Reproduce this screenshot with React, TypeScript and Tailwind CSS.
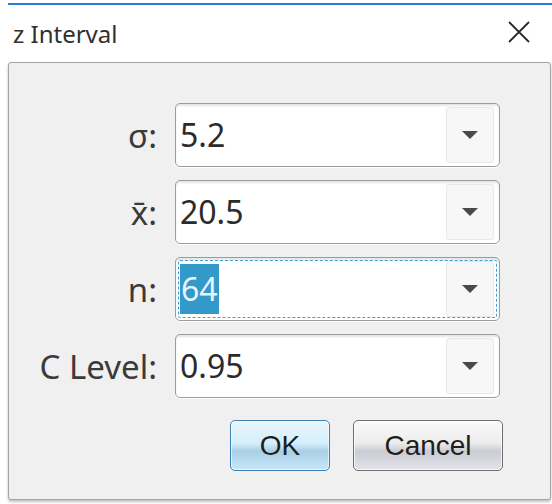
import type { ReactNode } from "react";

type Field = {
  label: string;
  value: string;
  focused?: boolean;
};

const fields: Field[] = [
  { label: "σ:", value: "5.2" },
  { label: "x̄:", value: "20.5" },
  { label: "n:", value: "64", focused: true },
  { label: "C Level:", value: "0.95" },
];

function ComboBox({ value, focused }: { value: string; focused?: boolean }) {
  return (
    <div
      className={`flex h-[64px] w-[325px] items-stretch rounded-[5px] border border-[#9c9c9c] bg-white shadow-[inset_0_2px_2px_rgba(0,0,0,0.10),0_1px_0_#ffffff] ${
        focused ? "outline-1 outline-dashed outline-[#3a9fd5] -outline-offset-[4px]" : ""
      }`}
    >
      <div className="flex flex-1 items-center pl-[4px] text-[32px] leading-none text-[#2b2b2b]">
        {focused ? (
          <span className="inline-block bg-[#3399c8] px-[1px] leading-[50px] text-[#e6f5ff]">
            {value}
          </span>
        ) : (
          <span>{value}</span>
        )}
      </div>
      {/* dropdown arrow segment */}
      <div className="my-[3px] mr-[5px] flex w-[48px] items-center justify-center rounded-[3px] border border-[#e8e8e8] bg-[#f7f7f7]">
        <svg width="16" height="8" viewBox="0 0 16 8">
          <path d="M0 0 L16 0 L8 8 Z" fill="#4a4a4a" />
        </svg>
      </div>
    </div>
  );
}

function DialogButton({
  children,
  primary,
  width,
}: {
  children: ReactNode;
  primary?: boolean;
  width: string;
}) {
  return (
    <button
      className={`${width} flex h-[51px] items-center justify-center rounded-[5px] border font-['Liberation_Sans',Arial,sans-serif] text-[28px] leading-none text-[#1e1e1e] ${
        primary
          ? "border-[#3c7fb1] bg-[linear-gradient(to_bottom,#eaf6fd_0%,#d4effc_45%,#a9cfe6_62%,#c9e6f7_100%)] shadow-[inset_0_0_0_1px_rgba(255,255,255,0.6)]"
          : "border-[#707070] bg-[linear-gradient(to_bottom,#fafafa_0%,#ececec_45%,#c9ccd3_62%,#e2e4e8_100%)] shadow-[inset_0_0_0_1px_rgba(255,255,255,0.7)]"
      }`}
    >
      {children}
    </button>
  );
}

export default function App() {
  return (
    <div className="h-[504px] w-[552px] overflow-hidden bg-white font-['Noto_Sans',sans-serif]">
      {/* edge of the window behind */}
      <div className="h-[3px]" />
      <div className="ml-[8px] h-[2px] bg-[#2b7bd6]" />

      {/* ================= TITLE BAR ================= */}
      <div className="flex h-[57px] items-center justify-between pl-[13px] pr-[22px]">
        <h1 className="text-[24px] leading-none text-[#303030]">z Interval</h1>
        <svg width="22" height="22" viewBox="0 0 22 22" className="mb-[3px]">
          <path d="M1 1 L21 21 M21 1 L1 21" stroke="#2a2a2a" strokeWidth="1.8" />
        </svg>
      </div>

      {/* ================= PANEL ================= */}
      <div className="ml-[8px] mr-[1px] h-[438px] rounded-[3px] border border-[#a3a3a3] bg-[#f0f0f0] pt-[40px] shadow-[0_2px_3px_rgba(0,0,0,0.25)]">
        <div className="flex flex-col gap-[13px]">
          {fields.map((f) => (
            <div key={f.label} className="flex items-center gap-[18px]">
              <span className="w-[148px] text-right text-[33px] leading-none text-[#3a3a3a]">
                {f.label}
              </span>
              <ComboBox value={f.value} focused={f.focused} />
            </div>
          ))}
        </div>

        <div className="mt-[22px] flex justify-end gap-[23px] pr-[47px]">
          <DialogButton primary width="w-[100px]">
            OK
          </DialogButton>
          <DialogButton width="w-[150px]">Cancel</DialogButton>
        </div>
      </div>
    </div>
  );
}
